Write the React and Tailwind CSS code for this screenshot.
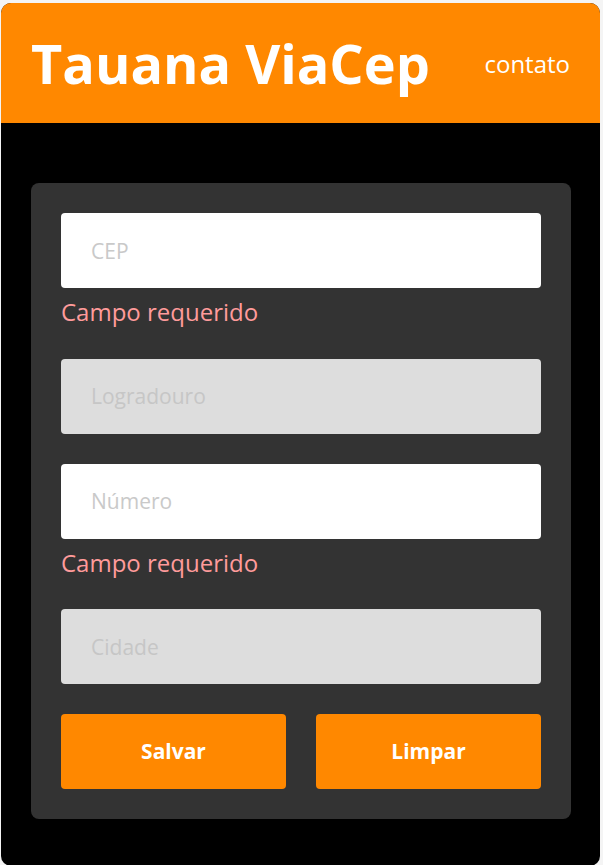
export default function App() {
  const font = { fontFamily: '"Open Sans", "Noto Sans", sans-serif' };

  const Field = ({ placeholder, disabled, error }) => (
    <div className="flex flex-col">
      <input
        type="text"
        placeholder={placeholder}
        disabled={disabled}
        className={
          'h-[75px] w-full rounded px-[30px] text-[21px] outline-none ' +
          (disabled
            ? 'bg-[#dddddd] placeholder:text-[#c6c6c6]'
            : 'bg-white placeholder:text-[#c9c9c9]')
        }
        style={font}
      />
      {error && (
        <span className="pt-[7px] text-[24px] leading-[33.5px] text-[#ff9b9b]">
          Campo requerido
        </span>
      )}
    </div>
  );

  return (
    <div className="min-h-[865px] bg-[#f4f4f4] pl-[1px] pt-[3px]" style={font}>
      <div className="flex min-h-[863px] w-[599px] flex-col overflow-hidden rounded-[10px] bg-black">
        <header className="flex h-[120px] items-center justify-between bg-[#ff8800] px-[30px]">
          <h1 className="text-[54px] font-bold leading-none text-white">Tauana ViaCep</h1>
          <a className="pt-[2px] text-[24px] text-white">contato</a>
        </header>

        <main className="pt-[60px]">
          <form className="ml-[30px] flex w-[540px] flex-col gap-[30px] rounded-lg bg-[#333333] p-[30px]">
            <Field placeholder="CEP" error />
            <Field placeholder="Logradouro" disabled />
            <Field placeholder="Número" error />
            <Field placeholder="Cidade" disabled />
            <div className="flex gap-[30px]">
              <button
                type="button"
                className="h-[75px] flex-1 rounded bg-[#ff8800] text-[21px] font-bold text-white"
              >
                Salvar
              </button>
              <button
                type="button"
                className="h-[75px] flex-1 rounded bg-[#ff8800] text-[21px] font-bold text-white"
              >
                Limpar
              </button>
            </div>
          </form>
        </main>
      </div>
    </div>
  );
}
